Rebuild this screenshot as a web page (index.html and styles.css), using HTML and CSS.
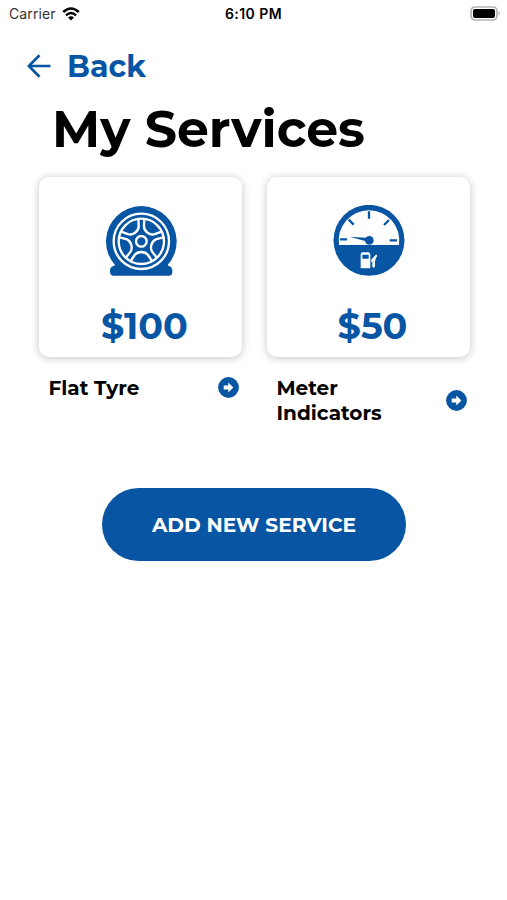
FILE: index.html
```html
<!DOCTYPE html>
<html lang="en">
  <head>
    <meta charset="utf-8">
    <meta name="viewport" content="width=device-width, initial-scale=1">
    <title>My Services</title>
    <link rel="stylesheet" href="styles.css">
  </head>
  <body>
    <div class="status-bar">
      <div class="carrier">
        <span>Carrier</span>
        <svg class="wifi" viewBox="0 0 18 14">
          <path d="M1.2 5 Q9 -2 16.8 5" fill="none" stroke="#000" stroke-width="2.5"/>
          <path d="M3.9 8.3 Q9 3.8 14.1 8.3" fill="none" stroke="#000" stroke-width="2.3"/>
          <path d="M9 13.6 L6 10.6 Q9 8 12 10.6 Z"/>
        </svg>
      </div>
      <span class="time">6:10 PM</span>
      <svg class="battery" viewBox="0 0 31 15">
        <rect x="1" y="1" width="26" height="13" rx="4" fill="#fff" stroke="#b5b5b5" stroke-width="1.7"/>
        <rect x="3" y="3" width="22" height="9" rx="2"/>
        <path d="M28.6 5.3 Q31.4 7.5 28.6 9.7 Z" fill="#b5b5b5"/>
      </svg>
    </div>

    <a class="back" href="#">
      <svg class="back-arrow" viewBox="0 0 24 24">
        <path d="M23.5 12 H2 M12.5 1.3 L1.8 12 L12.5 22.7" fill="none" stroke="currentColor" stroke-width="2.7"/>
      </svg>
      <span>Back</span>
    </a>

    <h1 class="title">My Services</h1>

    <div class="services">
      <div class="service">
        <div class="card">
          <svg class="icon" viewBox="30 29 216 216">
            <!-- tyre and the flattened base -->
            <path d="M60 209 A106 106 0 1 1 218 209 Q220 212 227 214 Q233 219 232 230 Q232 241 222 241 H56 Q46 241 45 230 Q44 219 50 214 Q57 212 60 209 Z" fill="#0755a3"/>
            <g fill="none" stroke="#fff" stroke-width="7" stroke-linejoin="round">
              <circle cx="139" cy="138" r="83"/>
              <circle cx="139" cy="138" r="68"/>
              <circle cx="139" cy="138" r="16"/>
              <path id="window" d="M107 197 L119 179 Q126 170 139 170 Q152 170 159 179 L171 197"/>
              <use href="#window" transform="rotate(72 139 138)"/>
              <use href="#window" transform="rotate(144 139 138)"/>
              <use href="#window" transform="rotate(216 139 138)"/>
              <use href="#window" transform="rotate(288 139 138)"/>
            </g>
          </svg>
          <span class="price">$100</span>
        </div>
        <div class="label">
          <span class="name">Flat Tyre</span>
          <svg class="go" viewBox="0 0 21 21">
            <circle cx="10.5" cy="10.5" r="10.4" fill="#0755a3"/>
            <path d="M5.7 8.4 H10.3 V5.6 L15.4 10.5 L10.3 15.4 V12.6 H5.7 Z" fill="#fff"/>
          </svg>
        </div>
      </div>

      <div class="service">
        <div class="card">
          <svg class="icon" viewBox="31 29 216 216">
            <circle cx="139" cy="135" r="106.5" fill="#0755a3"/>
            <path d="M49 149 A91 91 0 1 1 229 149 Z" fill="#fff"/>
            <g stroke="#0755a3" stroke-width="7">
              <path d="M52 132 H73 M201 135 H223 M139 48 V70 M78 73 L93 88 M199 74 L184 89"/>
            </g>
            <circle cx="140" cy="135" r="13" fill="#0755a3"/>
            <path d="M82 124 L140 128 V141 Z" fill="#0755a3"/>
            <!-- fuel pump -->
            <path d="M114 219 V178 Q114 171 121 171 H136 Q143 171 143 178 V219 Z M119 178 V190 H138 V178 Z" fill="#fff" fill-rule="evenodd"/>
            <path d="M145 198 Q151 195 151 205 V213 Q154 218 155 211 V194 M149 196 L162 179" fill="none" stroke="#fff" stroke-width="4"/>
            <path d="M145 193 L160 178 L162 183 L156 200 Z" fill="#fff"/>
          </svg>
          <span class="price">$50</span>
        </div>
        <div class="label">
          <span class="name">Meter<br>Indicators</span>
          <svg class="go" viewBox="0 0 21 21">
            <circle cx="10.5" cy="10.5" r="10.4" fill="#0755a3"/>
            <path d="M5.7 8.4 H10.3 V5.6 L15.4 10.5 L10.3 15.4 V12.6 H5.7 Z" fill="#fff"/>
          </svg>
        </div>
      </div>
    </div>

    <button class="add" type="button">ADD NEW SERVICE</button>
  </body>
</html>
```

FILE: styles.css
```css
* { box-sizing: border-box; }
body { margin: 0; background: #fff; color: #000; font-family: Montserrat, Inter, sans-serif; }
svg { display: block; flex: none; }

.status-bar { display: grid; grid-template-columns: 1fr auto 1fr; align-items: center; height: 27px; padding: 0 6px 0 9px; font: 14px/17px Inter, sans-serif; }
.carrier { display: flex; align-items: center; gap: 6px; color: #333; letter-spacing: 0.1px; }
.wifi { width: 18px; height: 14px; }
.time { padding-right: 3px; font-weight: 600; font-size: 14px; letter-spacing: 0.45px; }
.battery { width: 31px; height: 15px; justify-self: end; }

.back { display: flex; align-items: center; gap: 16px; height: 38px; margin: 20px 0 0 27px; color: #0755a3; font-size: 30px; font-weight: 700; text-decoration: none; }
.back-arrow { width: 24px; height: 24px; }

.title { margin: 14px 0 0 52px; font-size: 50.5px; line-height: 60px; font-weight: 700; white-space: nowrap; }

.services { display: grid; grid-template-columns: 203px 203px; gap: 25px; margin: 18px 0 0 38.5px; }
.card { display: flex; flex-direction: column; align-items: center; height: 180px; padding: 28px 0 0 1px; border-radius: 10px; background: #fff; box-shadow: 0 1px 8px rgba(0, 0, 0, 0.24); }
.icon { width: 72px; height: 72px; }
.price { margin-top: 27px; padding-left: 8px; color: #0755a3; font-size: 36.5px; line-height: 44px; font-weight: 700; }
.label { display: flex; align-items: center; justify-content: space-between; margin-top: 18px; padding: 0 3px 0 10px; }
.name { padding-top: 1px; font-size: 20px; line-height: 24.5px; font-weight: 700; }
.go { width: 21px; height: 21px; }

.add { display: block; width: 304px; height: 73px; margin: 63px auto 0 102px; padding: 0; border: 0; border-radius: 37px; background: #0755a3; color: #fff; font: 700 20.2px Montserrat, Inter, sans-serif; white-space: nowrap; }
```
